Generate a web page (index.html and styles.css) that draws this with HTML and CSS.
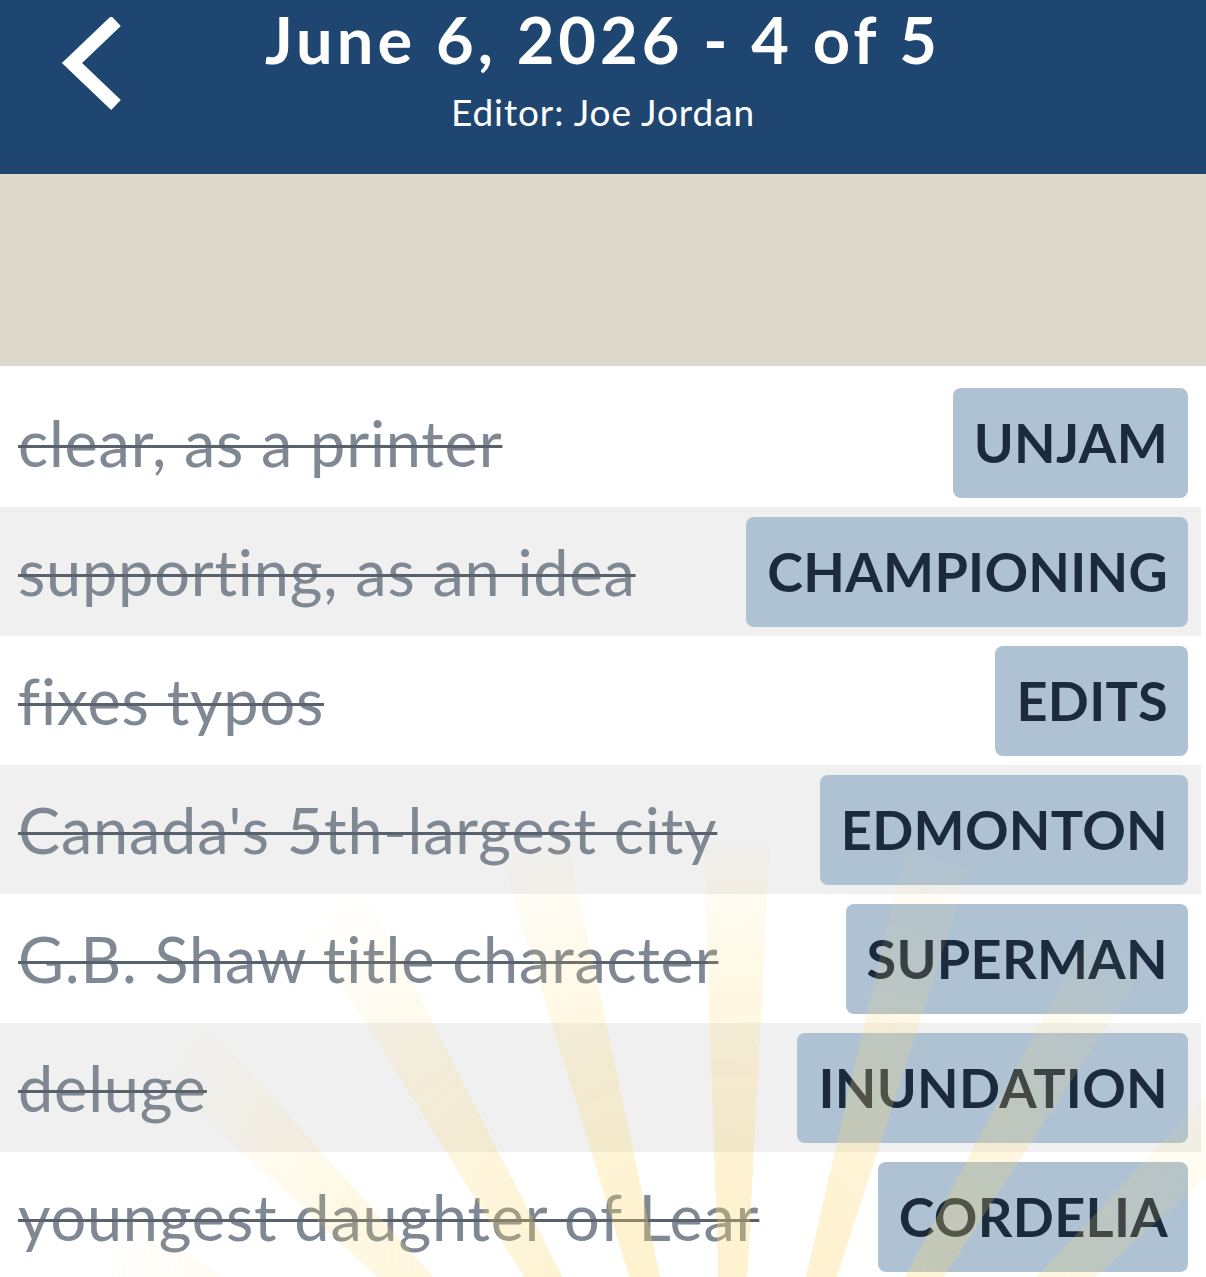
FILE: index.html
```html
<!DOCTYPE html>
<html lang="en">
<head>
<meta charset="utf-8">
<title>June 6, 2026 - 4 of 5</title>
<link rel="stylesheet" href="styles.css">
</head>
<body>
<header class="topbar">
  <div class="back">
    <svg class="back-icon" width="64" height="96" viewBox="0 0 64 96" aria-hidden="true">
      <polyline points="56,4 12,46 56,88" fill="none" stroke="#ffffff" stroke-width="14" stroke-linecap="butt" stroke-linejoin="miter"/>
    </svg>
  </div>
  <div class="titles">
    <h1 class="title">June 6, 2026 - 4 of 5</h1>
    <p class="subtitle">Editor: Joe Jordan</p>
  </div>
  <div class="spacer"></div>
</header>
<div class="banner"></div>
<main class="list">
  <div class="row">
    <span class="clue">clear, as a printer</span>
    <span class="answer">UNJAM</span>
  </div>
  <div class="row alt">
    <span class="clue">supporting, as an idea</span>
    <span class="answer">CHAMPIONING</span>
  </div>
  <div class="row">
    <span class="clue">fixes typos</span>
    <span class="answer">EDITS</span>
  </div>
  <div class="row alt">
    <span class="clue">Canada's 5th-largest city</span>
    <span class="answer">EDMONTON</span>
  </div>
  <div class="row">
    <span class="clue">G.B. Shaw title character</span>
    <span class="answer">SUPERMAN</span>
  </div>
  <div class="row alt">
    <span class="clue">deluge</span>
    <span class="answer">INUNDATION</span>
  </div>
  <div class="row">
    <span class="clue">youngest daughter of Lear</span>
    <span class="answer">CORDELIA</span>
  </div>
  <div class="rays" aria-hidden="true"></div>
</main>
</body>
</html>
```
FILE: styles.css
```css
html, body {
  margin: 0;
  padding: 0;
  background: #ffffff;
}
body {
  font-family: "Lato", "Noto Sans", sans-serif;
  width: 1206px;
  height: 1277px;
  overflow: hidden;
}
.topbar {
  height: 174px;
  background: #1f4670;
  display: grid;
  grid-template-columns: 1fr auto 1fr;
  align-items: start;
  color: #ffffff;
}
.back {
  padding: 17px 0 0 60px;
}
.back-icon {
  display: block;
}
.titles {
  text-align: center;
}
.title {
  margin: 0;
  font-size: 65px;
  font-weight: 700;
  line-height: 78px;
  letter-spacing: 4px;
}
.subtitle {
  margin: 0;
  padding-top: 12px;
  font-size: 37px;
  font-weight: 400;
  line-height: 44px;
  letter-spacing: 0.9px;
}
.banner {
  height: 192px;
  background: #ded8cc;
}
.list {
  position: relative;
  padding-top: 12px;
}
.row {
  height: 129px;
  margin-right: 5px;
  padding: 0 13px 0 18px;
  display: flex;
  align-items: center;
  justify-content: space-between;
  background: #ffffff;
}
.row.alt {
  background: #f0f0f0;
}
.clue {
  font-size: 63px;
  line-height: 1.2;
  color: #7f8893;
  letter-spacing: 0.8px;
  text-decoration: line-through;
  text-decoration-color: #59626c;
  text-decoration-thickness: 3px;
  white-space: nowrap;
}
.answer {
  height: 110px;
  display: flex;
  align-items: center;
  padding: 0 20px 0 21px;
  background: #afc2d3;
  border-radius: 8px;
  color: #1b2a3d;
  font-size: 54px;
  font-weight: 700;
  letter-spacing: 0.3px;
}
.rays {
  position: absolute;
  left: 0;
  right: 0;
  top: 480px;
  bottom: 0;
  pointer-events: none;
  background: repeating-conic-gradient(from -2deg at 730px 760px,
    rgba(252, 216, 110, 0.32) 0deg 5deg,
    rgba(252, 216, 110, 0) 5deg 15deg);
  -webkit-mask-image: radial-gradient(ellipse 620px 480px at 720px 100%, #000 20%, rgba(0,0,0,0.6) 60%, rgba(0,0,0,0) 100%);
  mask-image: radial-gradient(ellipse 620px 480px at 720px 100%, #000 20%, rgba(0,0,0,0.6) 60%, rgba(0,0,0,0) 100%);
}
```
